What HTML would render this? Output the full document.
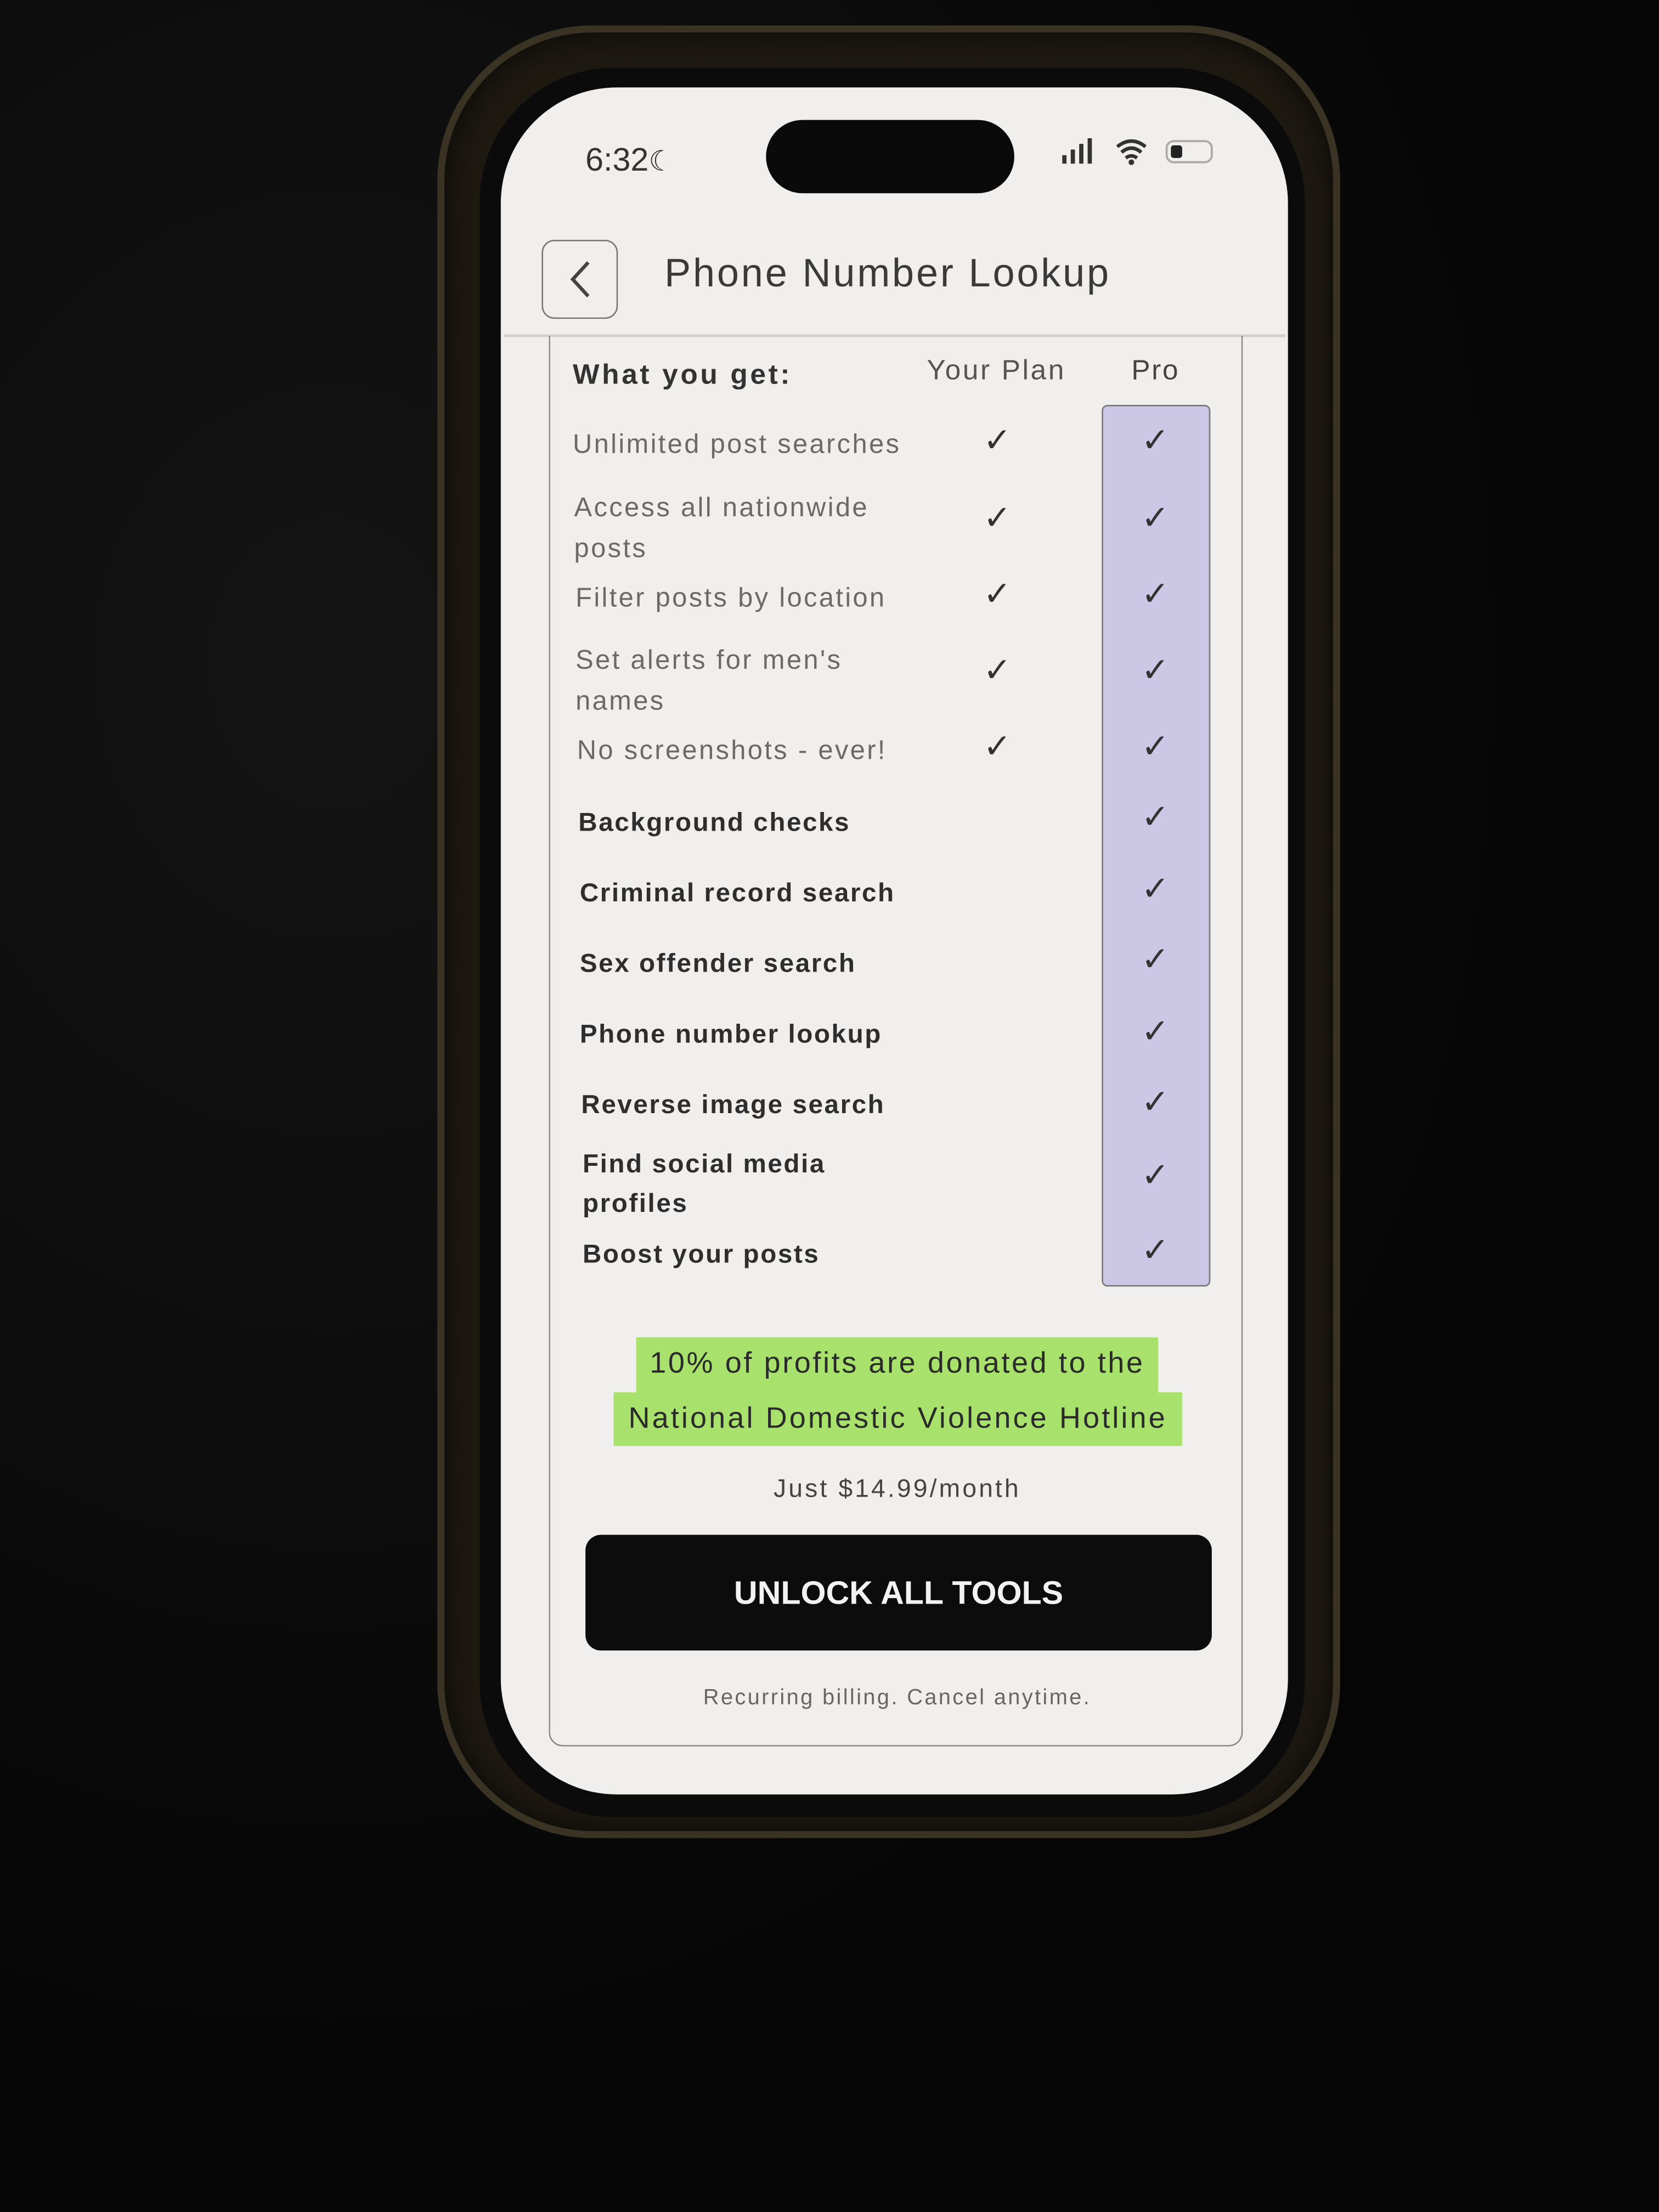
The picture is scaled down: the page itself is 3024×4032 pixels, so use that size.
<!DOCTYPE html>
<html><head><meta charset="utf-8"><style>
html,body{margin:0;padding:0;background:#070707;}
body{width:3024px;height:4032px;overflow:hidden;position:relative;}
#w{position:absolute;left:0;top:0;width:1176px;height:1568px;transform:scale(2.5714);transform-origin:0 0;font-family:"Liberation Sans",sans-serif;background:radial-gradient(ellipse at 20% 30%,#141414,#050505 70%);}
.a{position:absolute;}
.case{left:310px;top:18px;width:640px;height:1285px;border-radius:110px;background:#1e1a12;box-shadow:inset 0 0 0 5px #3a3324,inset 0 0 30px #000;}
.bez{left:340px;top:48px;width:585px;height:1240px;border-radius:95px;background:#0b0b0b;}
.scr{left:355px;top:62px;width:558px;height:1210px;border-radius:82px;background:#f0efed;overflow:hidden;}
.t{color:#333;white-space:nowrap;}
.lt{font-size:19px;color:#6a6a6a;letter-spacing:1.3px;}
.md{font-size:18.5px;color:#2e2e2e;font-weight:bold;letter-spacing:1px;}
.ck{font-size:24px;color:#333;width:40px;text-align:center;line-height:26px;}
</style></head><body><div id="w">
<div class="a case"></div>
<div class="a bez"></div>
<div class="a scr"></div>
<div class="a" style="left:543px;top:85px;width:176px;height:52px;border-radius:26px;background:#0a0a0a"></div>
<div class="a t" style="left:415px;top:100px;font-size:23px;color:#333">6:32<span style="font-size:20px">☾</span></div>
<svg class="a" style="left:750px;top:96px" width="115" height="24" viewBox="0 0 115 24">
<rect x="3" y="14" width="3" height="6" fill="#333"/><rect x="9" y="10" width="3" height="10" fill="#333"/><rect x="15" y="6" width="3" height="14" fill="#333"/><rect x="21" y="2" width="3" height="18" fill="#333"/>
<path d="M42 8 Q52 0 62 8 M45 12 Q52 6 59 12 M48 16 Q52 13 56 16" stroke="#333" stroke-width="2.5" fill="none"/><circle cx="52" cy="19" r="2" fill="#333"/>
<rect x="77" y="4" width="32" height="15" rx="5" stroke="#aaa" stroke-width="1.5" fill="none"/><rect x="80" y="7" width="8" height="9" rx="2" fill="#222"/></svg>
<div class="a" style="left:384px;top:170px;width:54px;height:56px;border:1.5px solid #777;border-radius:9px;box-sizing:border-box"></div>
<svg class="a" style="left:400px;top:182px" width="24" height="32"><path d="M17 4 L6 16 L17 28" stroke="#444" stroke-width="2.5" fill="none"/></svg>
<div class="a t" style="left:471px;top:178px;font-size:28px;color:#3a3a3a;letter-spacing:1.5px">Phone Number Lookup</div>
<div class="a" style="left:357px;top:237px;width:554px;height:2px;background:#d2d2d2"></div>
<div class="a" style="left:389px;top:238px;width:492px;height:1000px;border:1.5px solid #888;border-top:none;border-radius:0 0 10px 10px;box-sizing:border-box"></div>
<div class="a t" style="left:406px;top:255px;font-size:20px;font-weight:bold;color:#333;letter-spacing:1.8px">What you get:</div>
<div class="a t" style="left:657px;top:252px;font-size:20px;color:#555;letter-spacing:1.4px">Your Plan</div>
<div class="a t" style="left:802px;top:252px;font-size:20px;color:#444;letter-spacing:1px">Pro</div>
<div class="a" style="left:781px;top:287px;width:77px;height:625px;background:#cdc7e6;border:1.5px solid #777;border-radius:4px;box-sizing:border-box"></div>
<div class="a t lt" style="left:406px;top:305px">Unlimited post searches</div>
<div class="a t lt" style="left:407px;top:346px;line-height:29px">Access all nationwide<br>posts</div>
<div class="a t lt" style="left:408px;top:414px">Filter posts by location</div>
<div class="a t lt" style="left:408px;top:454px;line-height:29px">Set alerts for men's<br>names</div>
<div class="a t lt" style="left:409px;top:522px">No screenshots - ever!</div>
<div class="a t md" style="left:410px;top:572px">Background checks</div>
<div class="a t md" style="left:411px;top:622px">Criminal record search</div>
<div class="a t md" style="left:411px;top:672px">Sex offender search</div>
<div class="a t md" style="left:411px;top:722px">Phone number lookup</div>
<div class="a t md" style="left:412px;top:772px">Reverse image search</div>
<div class="a t md" style="left:413px;top:811px;line-height:28px">Find social media<br>profiles</div>
<div class="a t md" style="left:413px;top:878px">Boost your posts</div>
<div class="a ck" style="left:687px;top:300px">✓</div>
<div class="a ck" style="left:687px;top:355px">✓</div>
<div class="a ck" style="left:687px;top:409px">✓</div>
<div class="a ck" style="left:687px;top:463px">✓</div>
<div class="a ck" style="left:687px;top:517px">✓</div>
<div class="a ck" style="left:799px;top:300px">✓</div>
<div class="a ck" style="left:799px;top:355px">✓</div>
<div class="a ck" style="left:799px;top:409px">✓</div>
<div class="a ck" style="left:799px;top:463px">✓</div>
<div class="a ck" style="left:799px;top:517px">✓</div>
<div class="a ck" style="left:799px;top:567px">✓</div>
<div class="a ck" style="left:799px;top:618px">✓</div>
<div class="a ck" style="left:799px;top:668px">✓</div>
<div class="a ck" style="left:799px;top:719px">✓</div>
<div class="a ck" style="left:799px;top:769px">✓</div>
<div class="a ck" style="left:799px;top:821px">✓</div>
<div class="a ck" style="left:799px;top:874px">✓</div>
<div class="a" style="left:451px;top:948px;width:370px;height:40px;background:#a8e16c"></div>
<div class="a" style="left:435px;top:987px;width:403px;height:38px;background:#a8e16c"></div>
<div class="a t" style="left:451px;top:955px;width:370px;text-align:center;font-size:21px;color:#2a2a2a;letter-spacing:1.4px">10% of profits are donated to the</div>
<div class="a t" style="left:435px;top:994px;width:403px;text-align:center;font-size:21px;color:#2a2a2a;letter-spacing:1.6px">National Domestic Violence Hotline</div>
<div class="a t" style="left:436px;top:1045px;width:400px;text-align:center;font-size:18px;color:#444;letter-spacing:1.6px">Just $14.99/month</div>
<div class="a" style="left:415px;top:1088px;width:444px;height:82px;background:#0c0c0c;border-radius:11px"></div>
<div class="a t" style="left:415px;top:1116px;width:444px;text-align:center;font-size:23px;font-weight:bold;color:#f2f2f2">UNLOCK ALL TOOLS</div>
<div class="a t" style="left:436px;top:1195px;width:400px;text-align:center;font-size:15.5px;color:#666;letter-spacing:1.3px">Recurring billing. Cancel anytime.</div>
</div></body></html>
